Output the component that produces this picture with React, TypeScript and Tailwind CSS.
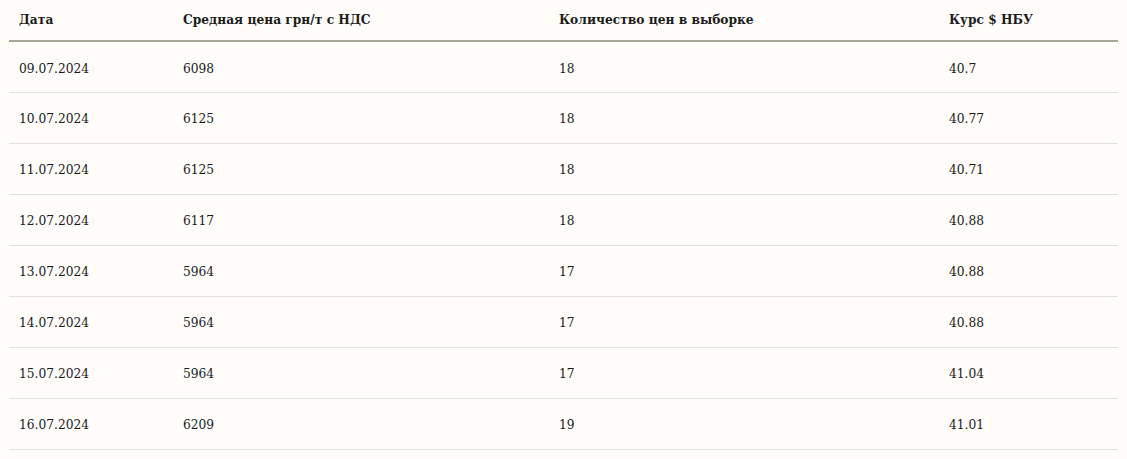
const rows = [
  { date: '09.07.2024', price: '6098', count: '18', rate: '40.7' },
  { date: '10.07.2024', price: '6125', count: '18', rate: '40.77' },
  { date: '11.07.2024', price: '6125', count: '18', rate: '40.71' },
  { date: '12.07.2024', price: '6117', count: '18', rate: '40.88' },
  { date: '13.07.2024', price: '5964', count: '17', rate: '40.88' },
  { date: '14.07.2024', price: '5964', count: '17', rate: '40.88' },
  { date: '15.07.2024', price: '5964', count: '17', rate: '41.04' },
  { date: '16.07.2024', price: '6209', count: '19', rate: '41.01' },
]

export default function App() {
  return (
    <div className="min-h-[459px] bg-[#fffcf9] px-[9px] font-['DejaVu_Serif_Condensed','DejaVu_Serif',serif] [font-stretch:condensed] text-[#1b1b1b]">
      <table className="w-full table-fixed border-collapse text-[13.6px]">
        <colgroup>
          <col className="w-[164px]" />
          <col className="w-[376px]" />
          <col className="w-[390px]" />
          <col />
        </colgroup>
        <thead>
          <tr className="h-[41px] border-b-2 border-[#a7a897]">
            <th className="px-[10px] pb-[1px] text-left font-bold">Дата</th>
            <th className="px-[10px] pb-[1px] text-left font-bold">Средная цена грн/т с НДС</th>
            <th className="px-[10px] pb-[1px] text-left font-bold">Количество цен в выборке</th>
            <th className="px-[10px] pb-[1px] text-left font-bold">Курс $ НБУ</th>
          </tr>
        </thead>
        <tbody>
          {rows.map((r) => (
            <tr key={r.date} className="h-[51px] border-b border-[#e2e0dd]">
              <td className="px-[10px] pt-[2px]">{r.date}</td>
              <td className="px-[10px] pt-[2px]">{r.price}</td>
              <td className="px-[10px] pt-[2px]">{r.count}</td>
              <td className="px-[10px] pt-[2px]">{r.rate}</td>
            </tr>
          ))}
        </tbody>
      </table>
    </div>
  )
}
